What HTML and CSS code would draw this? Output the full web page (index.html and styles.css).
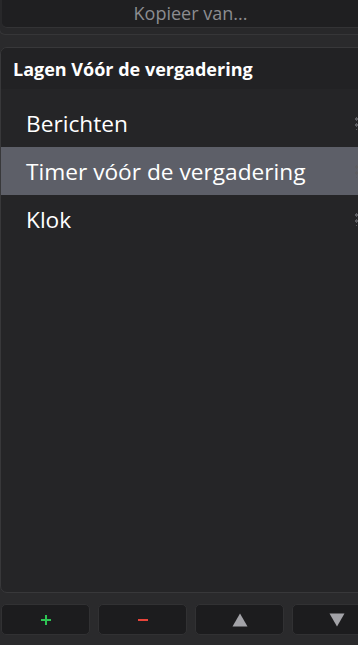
FILE: index.html
```html
<!DOCTYPE html>
<html>
<head>
<meta charset="utf-8">
<link rel="stylesheet" href="styles.css">
</head>
<body>
<div class="page">
  <div class="top">
    <button class="copy">Kopieer van...</button>
  </div>
  <section class="panel">
    <div class="panel-head">Lagen Vóór de vergadering</div>
    <ul class="list">
      <li class="row"><span>Berichten</span><i class="grip"></i></li>
      <li class="row selected"><span>Timer vóór de vergadering</span><i class="grip"></i></li>
      <li class="row"><span>Klok</span><i class="grip"></i></li>
    </ul>
  </section>
  <div class="actions">
    <button class="act"><svg width="12" height="12" viewBox="0 0 12 12"><path d="M6 1v10M1 6h10" stroke="#2ec454" stroke-width="2"/></svg></button>
    <button class="act"><svg width="12" height="12" viewBox="0 0 12 12"><path d="M1 6h10" stroke="#e8443a" stroke-width="2"/></svg></button>
    <button class="act"><svg width="16" height="14" viewBox="0 0 16 14"><path d="M8 0.5L15.5 13.5H0.5Z" fill="#a3a3a8"/></svg></button>
    <button class="act"><svg width="16" height="14" viewBox="0 0 16 14"><path d="M0.5 0.5H15.5L8 13.5Z" fill="#a3a3a8"/></svg></button>
  </div>
</div>
</body>
</html>
```

FILE: styles.css
```css
html, body {
  margin: 0;
  padding: 0;
  background: #2a2a2c;
  overflow: hidden;
}
body {
  width: 358px;
  height: 645px;
  font-family: "Open Sans", "Noto Sans", sans-serif;
}
.page {
  width: 382px;
  display: flex;
  flex-direction: column;
}
.top {
  background: #28282a;
  border: 1px solid #363638;
  border-top: none;
  border-radius: 0 0 6px 6px;
  padding: 0 2px 6px 2px;
  margin-left: -1px;
}
.copy {
  display: block;
  width: 100%;
  height: 28px;
  background: #1f1f21;
  border: none;
  border-bottom: 1px solid #333335;
  border-radius: 0 0 5px 5px;
  color: #8c8c90;
  font-family: inherit;
  font-size: 18px;
  padding: 0;
  line-height: 27px;
}
.panel {
  margin-top: 12px;
  height: 546px;
  border: 1px solid #38383a;
  border-radius: 7px;
  background: #252527;
  box-sizing: border-box;
  overflow: hidden;
  display: flex;
  flex-direction: column;
}
.panel-head {
  height: 41px;
  background: #222224;
  color: #ffffff;
  font-weight: 700;
  font-size: 18px;
  display: flex;
  align-items: center;
  padding-left: 12px;
}
.list {
  list-style: none;
  margin: 0;
  padding: 10px 0 0 0;
}
.row {
  height: 48px;
  display: flex;
  align-items: center;
  justify-content: space-between;
  padding: 0 20px 0 25px;
  color: #ffffff;
  font-size: 22.7px;
}
.row.selected {
  background: #5d5f68;
}
.grip {
  width: 3px;
  height: 14px;
  background: radial-gradient(circle, #5c5c60 0 1.5px, transparent 1.6px) 0 0 / 3px 6px;
  margin-right: 3px;
  flex: none;
}
.actions {
  margin-top: 11px;
  display: flex;
  gap: 8px;
  padding-left: 1px;
}
.act {
  flex: none;
  width: 89px;
  height: 31px;
  background: #1c1c1e;
  border: 1px solid #313133;
  border-radius: 5px;
  padding: 0;
  display: flex;
  align-items: center;
  justify-content: center;
}
.act svg {
  display: block;
}
```
